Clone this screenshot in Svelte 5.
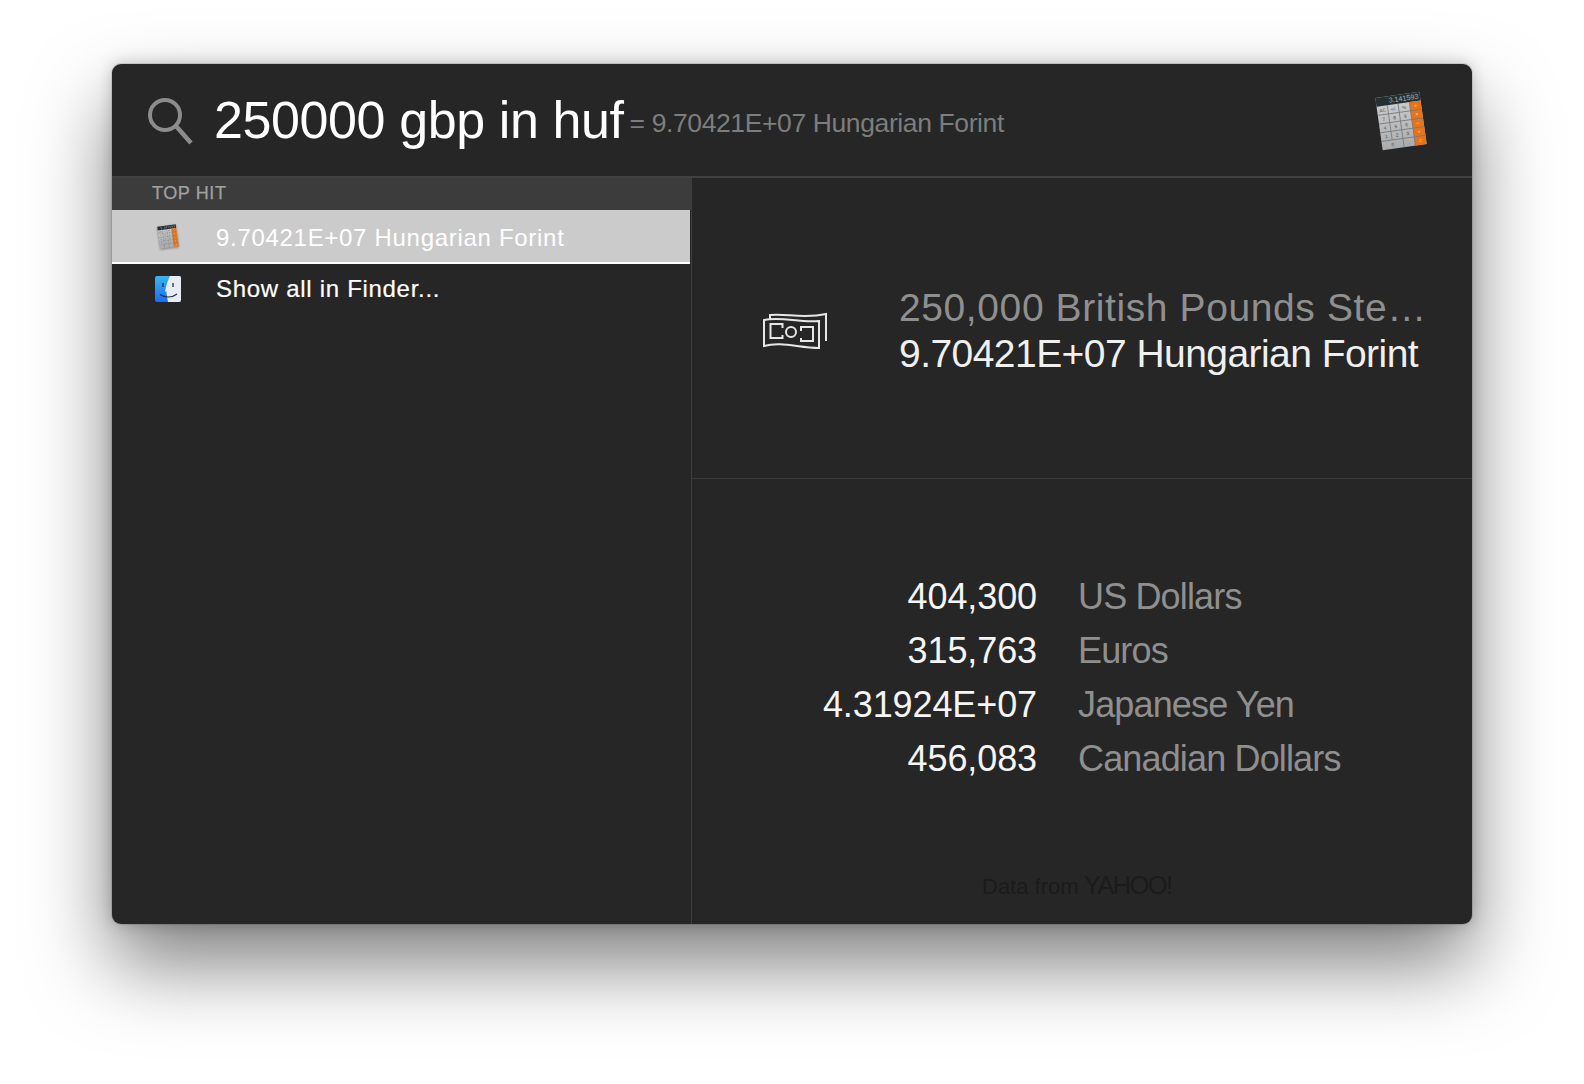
<script>
  const rates = [
    { value: '404,300', name: 'US Dollars' },
    { value: '315,763', name: 'Euros' },
    { value: '4.31924E+07', name: 'Japanese Yen' },
    { value: '456,083', name: 'Canadian Dollars' }
  ];
  const keyLabels = [
    ['AC', '+/-', '%'],
    ['7', '8', '9'],
    ['4', '5', '6'],
    ['1', '2', '3']
  ];
  const opLabels = ['÷', '×', '−', '+', '='];
</script>

{#snippet calc(w, id)}
  <svg class="calc" width={w} height={w} viewBox="0 0 60 60" aria-hidden="true">
    <defs>
      <linearGradient id={id} x1="0" y1="0" x2="0" y2="1">
        <stop offset="0" stop-color="#cfd1d2"/>
        <stop offset="1" stop-color="#a9abac"/>
      </linearGradient>
    </defs>
    <g transform="rotate(-8 30 30)">
      <rect x="8.500" y="4.500" width="43" height="51" fill="url(#{id})"/>
      <rect x="8.500" y="4.500" width="43" height="8.500" fill="#263033"/>
      <rect x="40.500" y="13" width="11" height="42.500" fill="#e8741a"/>
      <path d="M8.500 21.500H51.500M8.500 30H51.500M8.500 38.500H51.500M8.500 47H51.500M19 13V47M29.500 13V55.500M40.500 13V55.500" stroke="#77797a" stroke-width="0.8" fill="none"/>
      <text x="50" y="11" text-anchor="end" font-size="7" fill="#a9b0b2" font-family="Liberation Sans">3.141593</text>
      <g font-size="4.500" fill="#4a4a4a" text-anchor="middle" font-family="Liberation Sans">
        {#each keyLabels as row, r}
          {#each row as label, c}
            <text x={13.75 + c * 10.5} y={19 + r * 8.5}>{label}</text>
          {/each}
        {/each}
        <text x="19" y="53">0</text>
        <text x="35" y="53">.</text>
      </g>
      <g font-size="5" fill="#ffe2c8" text-anchor="middle" font-family="Liberation Sans">
        {#each opLabels as label, r}
          <text x="46" y={19 + r * 8.5}>{label}</text>
        {/each}
      </g>
    </g>
  </svg>
{/snippet}

<div class="page">
  <div class="window">
    <header class="search">
      <svg class="glass" width="46" height="48" viewBox="0 0 46 48" aria-hidden="true">
        <circle cx="18" cy="18" r="15" fill="none" stroke="#8c8c8c" stroke-width="4"/>
        <path d="M28.500 28.500L44 46" stroke="#8c8c8c" stroke-width="4.500" fill="none"/>
      </svg>
      <span class="query">250000 gbp in huf</span>
      <span class="completion">= 9.70421E+07 Hungarian Forint</span>
      <span class="head-icon">{@render calc(62, 'keys-a')}</span>
    </header>

    <div class="body">
      <aside class="list">
        <div class="section">TOP HIT</div>
        <div class="row selected">
          <span class="row-icon shadowed">{@render calc(33, 'keys-b')}</span>
          <span class="label">9.70421E+07 Hungarian Forint</span>
        </div>
        <div class="row finder">
          <span class="row-icon">
            <svg width="26" height="26" viewBox="0 0 26 26" aria-hidden="true">
              <defs>
                <linearGradient id="fl" x1="0" y1="0" x2="0" y2="1">
                  <stop offset="0" stop-color="#3ab4f4"/>
                  <stop offset="1" stop-color="#1c6cf0"/>
                </linearGradient>
              </defs>
              <rect width="26" height="26" rx="2" fill="url(#fl)"/>
              <path d="M15 0H24a2 2 0 0 1 2 2V24a2 2 0 0 1-2 2H13C12 21 11.500 18 11.500 15.500H10C11 9 13 4 15 0Z" fill="#e9edf3"/>
              <path d="M8 7V11M18 7V11" stroke="#20304a" stroke-width="1.300"/>
              <path d="M5 18.500C10 22 17 22 22 18" stroke="#20304a" stroke-width="1.100" fill="none"/>
            </svg>
          </span>
          <span class="label">Show all in Finder...</span>
        </div>
      </aside>

      <main class="detail">
        <section class="summary">
          <svg class="money" width="64" height="40" viewBox="0 0 64 40" aria-hidden="true">
            <g fill="none" stroke="#e6e6e6" stroke-width="2">
              <path d="M7 8V4C22 2 40 8 63 3V30"/>
              <path d="M1 9C18 5 36 12 56 10V37C36 37 18 30 1 35Z"/>
              <path d="M19.500 17V13H7.500V27H19.500V24M38 20V16H50V30H38V27"/>
              <circle cx="28" cy="21" r="5"/>
            </g>
          </svg>
          <div class="amounts">
            <div class="from">250,000 British Pounds Ste…</div>
            <div class="to">9.70421E+07 Hungarian Forint</div>
          </div>
        </section>
        <section class="rates">
          <div class="table">
            {#each rates as r}
              <span class="val">{r.value}</span>
              <span class="cur">{r.name}</span>
            {/each}
          </div>
          <div class="credit">Data from <span class="yahoo">YAHOO!</span></div>
        </section>
      </main>
    </div>
  </div>
</div>

<style>
  :global(body) {
    margin: 0;
    background: #fff;
  }
  .page {
    width: 1584px;
    height: 1084px;
    padding: 64px 112px 0;
    box-sizing: border-box;
    overflow: hidden;
    font-family: "Liberation Sans", Arial, sans-serif;
  }
  .window {
    width: 1360px;
    height: 860px;
    border-radius: 9px;
    background: #262626;
    display: flex;
    flex-direction: column;
    overflow: hidden;
    box-shadow: 0 40px 80px rgba(0, 0, 0, 0.5), 0 0 16px rgba(0, 0, 0, 0.22), 0 0 0 1px rgba(0, 0, 0, 0.1);
    color: #fff;
  }
  .search {
    height: 112px;
    flex: none;
    display: flex;
    align-items: center;
    padding: 0 40px 0 35px;
    border-bottom: 2px solid #414141;
    box-sizing: content-box;
  }
  .glass {
    flex: none;
    margin-top: 2px;
  }
  .query {
    font-size: 52px;
    letter-spacing: -0.4px;
    margin-left: 21px;
    white-space: nowrap;
    margin-top: -1px;
  }
  .completion {
    font-size: 26.500px;
    color: #7d7d7d;
    margin-left: 6px;
    margin-top: 6px;
    white-space: nowrap;
    letter-spacing: -0.39px;
  }
  .head-icon {
    margin-left: auto;
    display: flex;
    margin-top: 1px;
  }
  .calc {
    display: block;
  }
  .body {
    flex: 1;
    display: flex;
    min-height: 0;
  }
  .list {
    width: 578px;
    flex: none;
    border-right: 1px solid #3e3e3e;
    padding-right: 1px;
  }
  .section {
    height: 32px;
    background: #3c3c3c;
    color: #a0a0a0;
    font-size: 18px;
    line-height: 30px;
    padding-left: 40px;
    letter-spacing: 0.6px;
    -webkit-text-stroke: 0.25px #a0a0a0;
    margin-right: -1px;
  }
  .row {
    display: flex;
    align-items: center;
    font-size: 24px;
    padding-left: 43px;
    white-space: nowrap;
    letter-spacing: 0.7px;
  }
  .row.selected {
    background: #cbcbcb;
    height: 52px;
    border-bottom: 2px solid #fff;
  }
  .selected .label {
    margin-top: 3px;
  }
  .finder {
    height: 50px;
    -webkit-text-stroke: 0.2px #fff;
  }
  .row-icon {
    width: 26px;
    height: 26px;
    margin-right: 35px;
    display: flex;
    align-items: center;
    justify-content: center;
    flex: none;
  }
  .shadowed {
    filter: drop-shadow(0 1px 1px rgba(0, 0, 0, 0.35));
  }
  .detail {
    flex: 1;
    display: flex;
    flex-direction: column;
    min-width: 0;
  }
  .summary {
    height: 300px;
    flex: none;
    border-bottom: 1px solid #3a3a3a;
    display: flex;
    align-items: center;
    padding-left: 71px;
  }
  .money {
    flex: none;
    margin-right: 72px;
    margin-top: 5px;
  }
  .amounts {
    white-space: nowrap;
    font-size: 39px;
    line-height: 46px;
    margin-top: 5px;
  }
  .from {
    color: #8f8f8f;
    letter-spacing: 0.6px;
  }
  .to {
    color: #f0f0f0;
    letter-spacing: -0.55px;
  }
  .rates {
    flex: 1;
    display: flex;
    flex-direction: column;
    align-items: flex-start;
  }
  .table {
    display: grid;
    grid-template-columns: 345px auto;
    column-gap: 41px;
    font-size: 36px;
    line-height: 54px;
    margin-top: 91px;
  }
  .val {
    text-align: right;
    color: #f5f5f5;
    letter-spacing: -0.1px;
  }
  .cur {
    color: #8f8f8f;
    letter-spacing: -0.85px;
  }
  .credit {
    margin-top: auto;
    margin-bottom: 22px;
    margin-left: 290px;
    color: #1b1b1b;
    font-size: 22px;
    line-height: 30px;
    white-space: nowrap;
  }
  .yahoo {
    font-size: 25.500px;
    letter-spacing: -1.6px;
    margin-left: -1px;
  }
</style>
